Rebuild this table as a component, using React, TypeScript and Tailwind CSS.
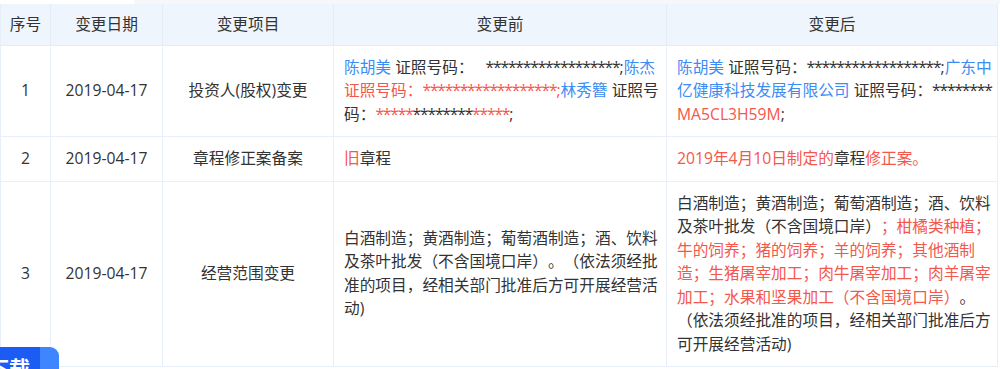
import React from 'react'

const B = ({ children }: { children: React.ReactNode }) => <span className="text-[#3b8cf5]">{children}</span>
const R = ({ children }: { children: React.ReactNode }) => <span className="text-[#f4574b]">{children}</span>
const Stars = ({ n, className = '' }: { n: number; className?: string }) => (
  <span className={'tracking-[-1.2px] ' + className}>{'*'.repeat(n)}</span>
)

const th = 'h-[41px] border-r border-b border-[#e4edf8] bg-[#eef5fd] font-normal text-center align-middle'
const td = 'border-r border-b border-[#e8eff8] align-middle'
const tdText = 'border-r border-b border-[#e8eff8] align-middle text-left pl-[10px] py-[10px]'

type Row = {
  no: number
  date: string
  item: string
  before: React.ReactNode
  after: React.ReactNode
}

const rows: Row[] = [
  {
    no: 1,
    date: '2019-04-17',
    item: '投资人(股权)变更',
    before: (
      <>
        <B>陈胡美</B> 证照号码：<Stars n={18} className="ml-[12px]" />;<B>陈杰</B>
        <R>证照号码：<Stars n={18} />;</R>
        <B>林秀簪</B> 证照号码：
        <R><Stars n={5} /></R><Stars n={8} /><R><Stars n={5} /></R>;
      </>
    ),
    after: (
      <>
        <B>陈胡美</B> 证照号码：<Stars n={18} />;<B>广东中亿健康科技发展有限公司</B> 证照号码：<Stars n={8} />
        <wbr />
        <R>MA5CL3H59M</R>;
      </>
    ),
  },
  {
    no: 2,
    date: '2019-04-17',
    item: '章程修正案备案',
    before: (
      <>
        <R>旧</R>章程
      </>
    ),
    after: (
      <>
        <R>2019年4月10日制定的</R>章程<R>修正案。</R>
      </>
    ),
  },
  {
    no: 3,
    date: '2019-04-17',
    item: '经营范围变更',
    before: <>白酒制造；黄酒制造；葡萄酒制造；酒、饮料及茶叶批发（不含国境口岸）。（依法须经批准的项目，经相关部门批准后方可开展经营活动)</>,
    after: (
      <>
        白酒制造；黄酒制造；葡萄酒制造；酒、饮料及茶叶批发（不含国境口岸）
        <R>；柑橘类种植；牛的饲养；猪的饲养；羊的饲养；其他酒制造；生猪屠宰加工；肉牛屠宰加工；肉羊屠宰加工；水果和坚果加工（不含国境口岸）</R>
        。（依法须经批准的项目，经相关部门批准后方可开展经营活动)
      </>
    ),
  },
]

export default function App() {
  return (
    <div
      className="relative w-[1000px] h-[369px] overflow-hidden bg-white text-[#333] text-[15.7px] leading-[23.5px] [text-spacing-trim:space-all]"
      style={{ fontFamily: '"Open Sans", "Noto Sans CJK SC", sans-serif' }}
    >
      <div className="flex h-[4px]">
        <div className="w-[134px] bg-white" />
        <div className="flex-1 bg-[#f6f7f8]" />
      </div>
      <table className="table-fixed border-collapse border-l border-[#e8eff8]">
        <colgroup>
          <col className="w-[50px]" />
          <col className="w-[112px]" />
          <col className="w-[171px]" />
          <col className="w-[333px]" />
          <col className="w-[331px]" />
        </colgroup>
        <thead>
          <tr>
            <th className={th}>序号</th>
            <th className={th}>变更日期</th>
            <th className={th}>变更项目</th>
            <th className={th}>变更前</th>
            <th className={th}>变更后</th>
          </tr>
        </thead>
        <tbody>
          {rows.map((r) => (
            <tr key={r.no}>
              <td className={td + ' text-center'}>{r.no}</td>
              <td className={td + ' text-center'}>{r.date}</td>
              <td className={td + ' text-center'}>{r.item}</td>
              <td className={tdText + ' pr-[5px]'}>{r.before}</td>
              <td className={tdText + ' pr-[3px]'}>{r.after}</td>
            </tr>
          ))}
        </tbody>
      </table>

      <div className="absolute left-0 bottom-0 flex h-[22px] w-[59px] overflow-hidden rounded-tr-[9px]">
        <div className="relative w-[40px] bg-[#1b5cf4]">
          <span className="absolute left-[-12px] top-[11px] text-[21px] font-bold leading-none text-white whitespace-nowrap">
            下载
          </span>
        </div>
        <div className="flex-1 bg-[#3d86ff]" />
      </div>
    </div>
  )
}
